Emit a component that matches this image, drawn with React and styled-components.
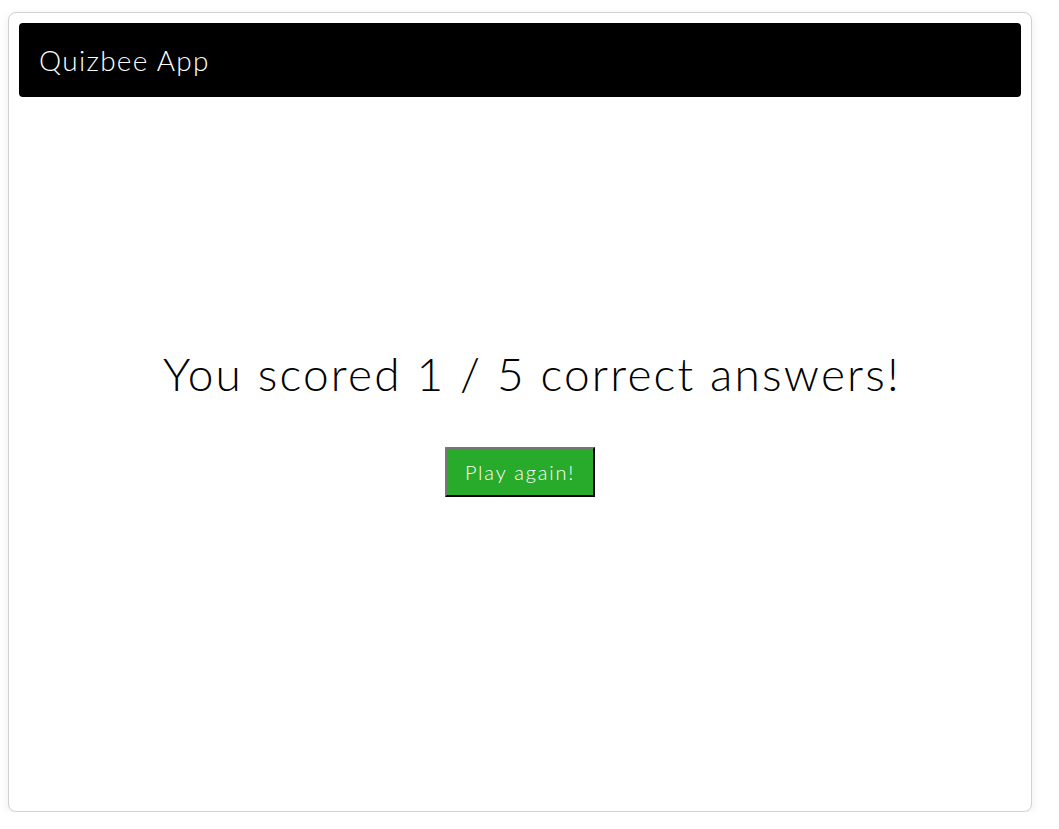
import React from 'react'
import styled, { createGlobalStyle } from 'styled-components'

const GlobalStyle = createGlobalStyle`
body {
  margin: 0;
  padding: 12px 0 0 8px;
  font-family: "Lato", "Open Sans", sans-serif;
  background: #fff;
}
`

const App = () => {
  return (
    <>
      <GlobalStyle />
      <Card>
        <Header>Quizbee App</Header>
        <Main>
          <Score>You scored 1 / 5 correct answers!</Score>
          <PlayButton onClick={() => null}>Play again!</PlayButton>
        </Main>
      </Card>
    </>
  )
}

export default App

const Card = styled.div`
box-sizing: border-box;
width: 1024px;
height: 800px;
border: 1px solid #d0d0d0;
border-radius: 8px;
box-shadow: 0 3px 10px rgba(0,0,0,0.08);
padding: 10px;
display: flex;
flex-direction: column;
background: #fff;
`

const Header = styled.div`
background: #000;
color: #fff;
height: 74px;
border-radius: 4px;
padding: 0 20px;
display: flex;
align-items: center;
font-size: 28px;
font-weight: 300;
letter-spacing: 1.3px;
`

const Main = styled.div`
flex: 1;
display: flex;
flex-direction: column;
align-items: center;
justify-content: center;
padding-bottom: 53px;
`

const Score = styled.div`
font-size: 46px;
font-weight: 300;
color: #000;
line-height: 52px;
margin: 0 0 47px 24px;
letter-spacing: 2.2px;
`

const PlayButton = styled.button`
width: 150px;
height: 50px;
background: #28aa2a;
color: #fff;
font-family: "Lato", "Open Sans", sans-serif;
font-weight: 300;
font-size: 20px;
letter-spacing: 1.8px;
border: 2px outset #767676;
border-right-color: #111;
border-bottom-color: #111;
cursor: pointer;
`
